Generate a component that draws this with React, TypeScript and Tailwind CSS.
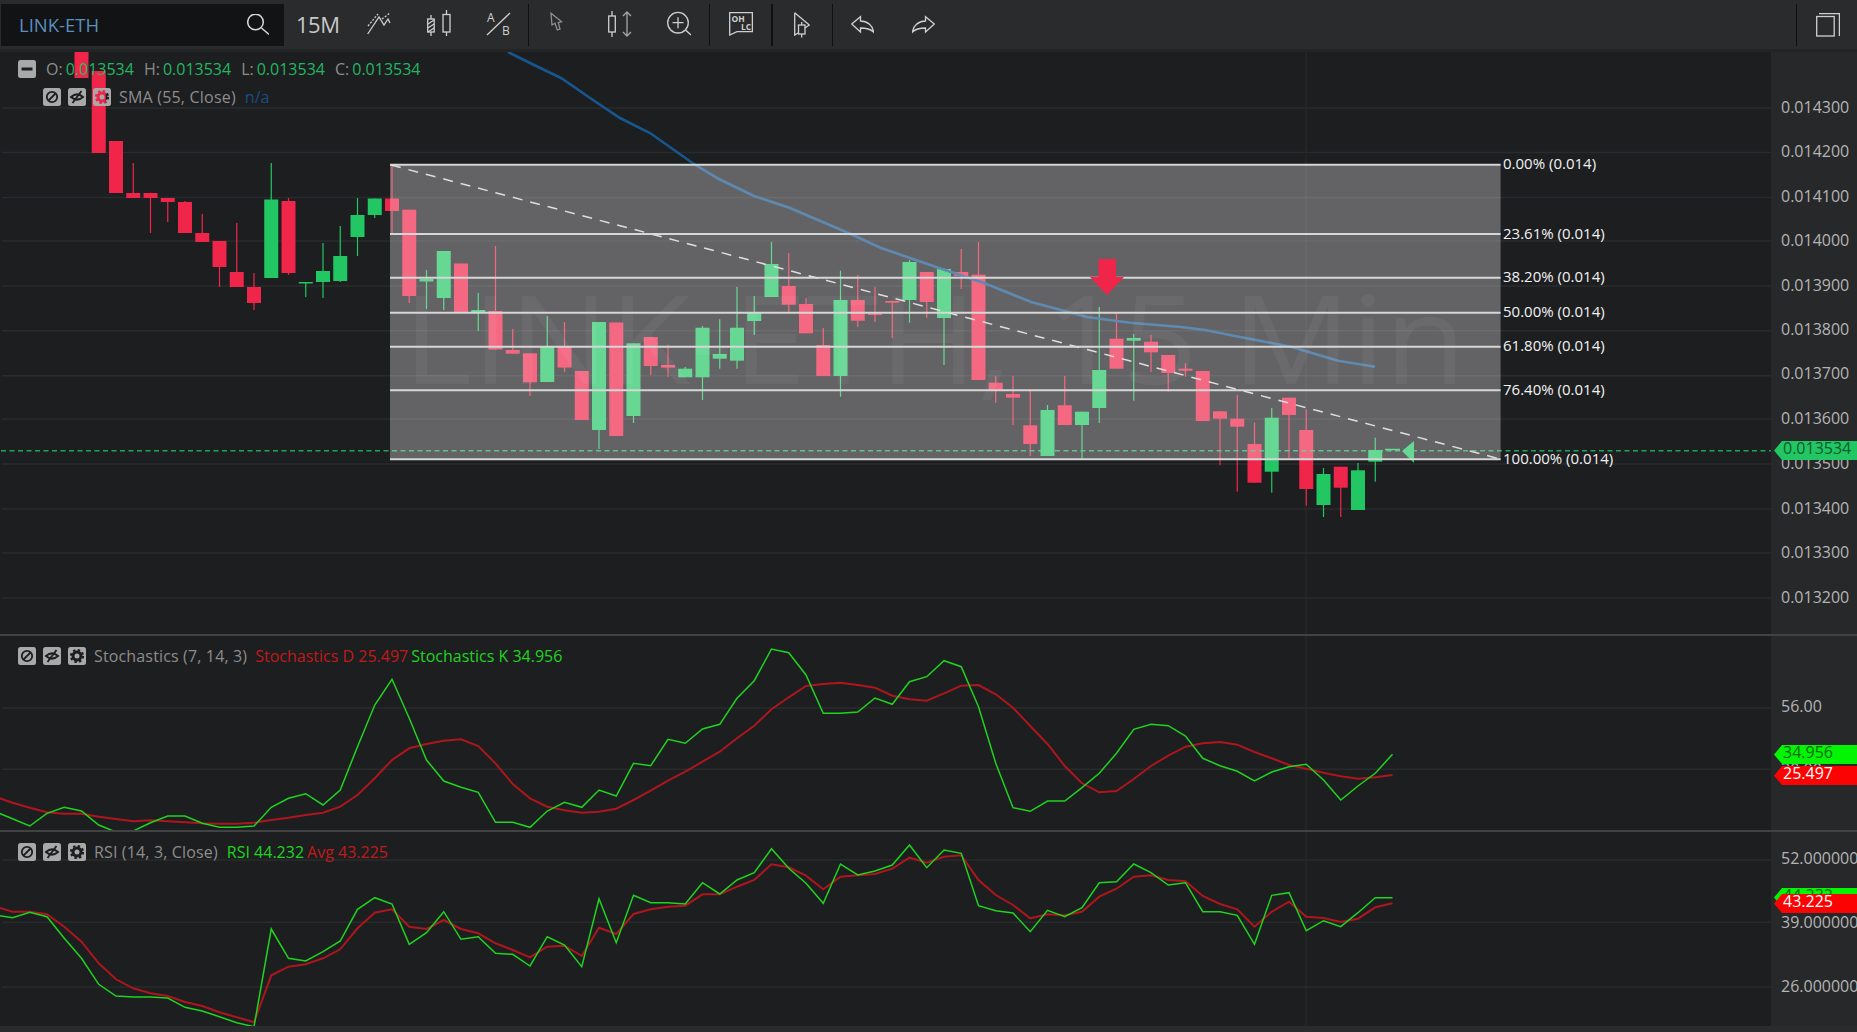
import React from 'react';

// [up, bodyTop, bodyBottom, wickTop, wickBottom]
type Candle = [number, number, number, number, number];

const candles: Candle[] = [
  [0, 40, 78, 40, 78], [0, 71, 153, 71, 153], [0, 141, 193, 141, 193], [0, 193, 198, 163, 198],
  [0, 193, 198, 193, 233], [0, 198, 202, 198, 222], [0, 202, 233, 201, 233], [0, 233, 242, 214, 242],
  [0, 241, 267, 241, 287], [0, 272, 287, 223, 287], [0, 287, 303, 273, 310], [1, 199.5, 278, 163, 278],
  [0, 201, 273, 198, 275], [1, 282, 283.5, 282, 297], [1, 271, 282, 243, 298], [1, 256, 281, 226, 282],
  [1, 215, 237, 198, 256], [1, 198.5, 215, 198.5, 218], [0, 198.5, 211, 165, 233], [0, 209.7, 296, 209.7, 303],
  [1, 279, 281.5, 270, 309], [1, 251, 298, 251, 310], [0, 263.5, 312.5, 263.5, 312.5], [1, 310, 313, 293, 331],
  [0, 311, 349.5, 246, 349.5], [0, 350, 353.7, 329, 353.7], [0, 353.3, 382.3, 353.3, 396], [1, 347, 382, 316, 382],
  [0, 347, 367.6, 322, 372], [0, 371, 420, 371, 420], [1, 322, 430, 322, 449], [0, 322.5, 436, 322.5, 436],
  [1, 343.3, 416, 343.3, 423], [0, 337, 366, 337, 375], [0, 365, 367.6, 344.7, 377], [1, 368.7, 377.3, 367, 377.3],
  [1, 327.7, 377.3, 326, 400], [1, 354, 358.7, 319.3, 368.7], [1, 327.7, 360.7, 287, 368.7], [1, 312.7, 321, 296, 335],
  [1, 264, 297, 242, 297], [0, 286, 304.7, 253, 312.7], [0, 304, 333.3, 298, 333.3], [0, 345, 376, 328, 376],
  [1, 300, 376, 270.7, 396.7], [0, 300, 320.7, 275, 327], [0, 313.5, 315, 287, 322], [0, 301, 302.7, 301, 338],
  [1, 262, 300, 260, 322.7], [0, 272, 302, 272, 318], [1, 269, 318, 268, 365], [0, 272, 276, 249, 289],
  [0, 274.7, 380, 242, 380], [0, 382.7, 390, 376, 402.7], [0, 394, 397.7, 376, 425], [0, 425.3, 444, 390.7, 456],
  [1, 410, 456, 405, 456], [0, 405.3, 425, 376, 425], [1, 411.7, 425, 411.7, 460], [1, 370, 408, 307, 423],
  [0, 338.7, 368.7, 312.7, 368.7], [1, 338, 340.7, 334, 400.7], [0, 341.7, 352.3, 335, 372], [0, 355, 373, 355, 391.7],
  [0, 368.7, 370.7, 363.3, 376.7], [0, 371, 421, 371, 421], [0, 411.3, 418.7, 411.3, 465.3], [0, 418.7, 426.7, 395, 491.7],
  [0, 444, 482.7, 422.7, 482.7], [1, 417.7, 471.7, 408, 492.7], [0, 397.7, 415, 397.7, 458], [0, 430, 489, 409.3, 505.7],
  [1, 474, 505, 468, 517], [0, 466.7, 487.7, 466.7, 517], [1, 470.3, 510, 463, 510], [1, 450, 461.7, 437.7, 481.7],
];

const candleX = (i: number) => 81.5 + 17.25 * i;

// indicator series start one step off each other at candle index -5
const stochK = [
  811.7, 818.7, 826, 813.3, 807.3, 811, 825, 832, 831, 822.7, 816, 816, 823.3, 827.3, 827.3, 826, 807.3, 798.3, 793.7, 805,
  790, 746.7, 705, 679.3, 718.3, 760, 781, 787.3, 792.3, 822.3, 822.3, 827.3, 811, 802.3, 807.3, 790, 796, 763.3, 765.7, 739.3,
  743.3, 729, 724.3, 698.3, 680.7, 649, 652.7, 675, 713.3, 713.3, 712, 698, 704.3, 681.7, 676.7, 660.7, 666.7, 706.7, 763.3, 807.7,
  811.3, 801, 801, 787.7, 773.3, 753.3, 729.3, 724.3, 725.7, 736, 758.3, 765.7, 771.3, 781, 772, 766.7, 764.3, 780, 800, 786,
  773.3, 754.3,
];
const stochD = [
  796.7, 802.7, 807.7, 812.3, 813.7, 813.7, 816.7, 819, 821.3, 820.3, 821.3, 822.3, 823.3, 823.7, 823.7, 822.7, 820, 817.7, 815, 812.7,
  806.7, 795, 778.3, 760, 748.3, 744, 740.7, 739.3, 746, 763.3, 784, 798.3, 806.7, 810.3, 812.7, 811.7, 808.7, 800, 790.7, 780.7,
  771.7, 761.7, 751.7, 738.3, 725.7, 709.3, 697.3, 686, 684, 682.7, 685, 687.7, 695.7, 699.3, 700.7, 693.3, 685.7, 685, 694.3, 707.7,
  726, 744, 766, 783.3, 792.3, 791, 779, 766, 755.7, 746.7, 743.3, 742, 744.7, 752, 758.3, 765, 768.7, 772.7, 776.3, 778.7,
  777.3, 775,
];
const rsiLine = [
  915, 917.7, 912.3, 916.7, 938.3, 958.3, 984.3, 996, 997, 997, 998, 1007.3, 1011, 1016.7, 1022.7, 1026.7, 929, 958.3, 961, 951.7,
  941, 909.3, 897.7, 904, 944.3, 932.7, 911.7, 939.3, 936.7, 953.3, 954.3, 966, 936.7, 945, 966.7, 898.7, 942.7, 895.3, 902.7, 902.7,
  904, 882.7, 894, 880, 872.7, 848.7, 868.3, 883.3, 903.3, 864, 875, 871, 865, 845, 867.7, 850, 853.3, 905.7, 910.7, 913,
  931.7, 910.3, 916.7, 907.7, 882.7, 881.7, 864, 872.7, 885, 882.7, 911.7, 911.7, 915.3, 944.3, 895.3, 892.7, 930.7, 920.7, 926.7, 912.7,
  897.7, 897.7,
];
const rsiAvg = [
  906.7, 911.7, 911.7, 914.3, 926.7, 941.7, 963.3, 979.3, 988.3, 993.3, 996, 1002, 1006, 1012.3, 1017.3, 1022.3, 975.3, 966.7, 964.3, 958.3,
  949.3, 928.3, 912.7, 909.3, 926.7, 929, 920, 929, 933.3, 943.3, 950, 957.3, 946.7, 945.7, 956, 927.7, 934, 914, 909.3, 906.7,
  905.7, 894.3, 894.3, 886.7, 880, 864.3, 867.3, 875.7, 889.3, 876.7, 875.3, 874, 868.7, 857.7, 862.7, 856.7, 855.3, 880, 895, 905,
  918.3, 914.3, 915.3, 911.7, 896.7, 888.7, 876.7, 875.3, 880, 881.3, 896, 904, 909.3, 926.7, 911.7, 901.7, 916.7, 918, 922, 918.7,
  907.3, 903.3,
];

const smaPoints =
  '508,52 530,63 561,78 593,100 620,118 650,133 695,164.7 719,179 754,196 790,208 853,235 881,248 936,267 984,283 1031,302 1087,317 1130,322.7 1181,327 1205,330 1240,337 1291,346.7 1338,360.7 1375,366.7';

const fibLevels = [
  { y: 164.7, label: '0.00% (0.014)' },
  { y: 234, label: '23.61% (0.014)' },
  { y: 277.7, label: '38.20% (0.014)' },
  { y: 312.7, label: '50.00% (0.014)' },
  { y: 346.7, label: '61.80% (0.014)' },
  { y: 390.3, label: '76.40% (0.014)' },
  { y: 459.3, label: '100.00% (0.014)' },
];

const CHART_W = 1771;
const CROSS_X = 1306;
const GRID = '#2a2b2d';

function toPoints(series: number[]) {
  return series.map((y, i) => `${candleX(i - 5)},${y}`).join(' ');
}

function GridLines({ ys }: { ys: number[] }) {
  return (
    <>
      {ys.map((y) => (
        <line key={y} x1={2} x2={CHART_W} y1={y} y2={y} stroke={GRID} strokeWidth={1.5} />
      ))}
      <line x1={CROSS_X} x2={CROSS_X} y1={0} y2={1032} stroke={GRID} strokeWidth={1} />
    </>
  );
}

function MainChart() {
  return (
    <svg className="absolute inset-0 block" width={CHART_W} height={582} viewBox={`0 52 ${CHART_W} 582`}>
      <GridLines ys={[108, 152.5, 197.5, 241, 286, 330.7, 375.7, 419, 464, 509, 553, 598]} />
      {candles.map(([up, top, bottom, wickTop, wickBottom], i) => {
        const x = candleX(i);
        const color = up ? '#22c764' : '#f0254a';
        return (
          <g key={i} fill={color}>
            <rect x={x - 0.6} y={wickTop} width={1.2} height={wickBottom - wickTop} />
            <rect x={x - 7} y={top} width={14} height={bottom - top} />
          </g>
        );
      })}
      <polyline points={smaPoints} fill="none" stroke="#17568f" strokeWidth={2.6} />
      <line x1={1} x2={CHART_W} y1={450.7} y2={450.7} stroke="#22c764" strokeOpacity={0.8} strokeWidth={1.6} strokeDasharray="5 3.5" />
      <line x1={1385} x2={1400} y1={449.5} y2={449.5} stroke="#22c764" strokeWidth={1.5} />
      <polygon points="1402,451 1414,441 1414,463" fill="#22c764" />
      {/* fibonacci box */}
      <rect x={390} y={164.7} width={1110.6} height={294.6} fill="#ffffff" fillOpacity={0.31} />
      <text x={403} y={384} fontSize={122} fill="#ffffff" fillOpacity={0.05} textLength={1063} lengthAdjust="spacingAndGlyphs">
        LINK-ETH, 15 Min
      </text>
      {fibLevels.map((level) => (
        <g key={level.label}>
          <line x1={390} x2={1500.6} y1={level.y} y2={level.y} stroke="#d6d6d6" strokeWidth={2} />
          <text x={1503} y={level.y + 4.5} fontSize={15} fill="#f2f2f2">
            {level.label}
          </text>
        </g>
      ))}
      <line x1={391} y1={165} x2={1500} y2={459} stroke="#dedede" strokeWidth={1.5} strokeDasharray="10 8" />
      <polygon points="1098.5,259 1116,259 1116,277 1124,277 1107,295 1090,277 1098.5,277" fill="#f0254a" />
    </svg>
  );
}

function IndicatorChart({ top, ys, green, red }: { top: number; ys: number[]; green: number[]; red: number[] }) {
  return (
    <svg className="absolute inset-0 block" width={CHART_W} height={194} viewBox={`0 ${top} ${CHART_W} 194`}>
      <GridLines ys={ys} />
      <polyline points={toPoints(red)} fill="none" stroke="#ad161d" strokeWidth={2} />
      <polyline points={toPoints(green)} fill="none" stroke="#1fd41f" strokeWidth={1.5} />
    </svg>
  );
}

function LegendIcon({ kind }: { kind: 'minus' | 'ban' | 'eye' | 'gear' }) {
  const id = `legend-${kind}`;
  return (
    <svg width={18} height={18} viewBox="0 0 18 18" className="shrink-0">
      <mask id={id}>
        <rect width={18} height={18} rx={2.5} fill="#fff" />
        {kind === 'minus' && <rect x={3.5} y={7.5} width={11} height={3} fill="#000" />}
        {kind === 'ban' && (
          <g stroke="#000" strokeWidth={1.8} fill="none">
            <circle cx={9} cy={9} r={5.2} />
            <line x1={5.5} y1={12.5} x2={12.5} y2={5.5} />
          </g>
        )}
        {kind === 'eye' && (
          <g stroke="#000" fill="none">
            <path d="M3 9 Q9 3.8 15 9 Q9 14.2 3 9Z" strokeWidth={2} />
            <line x1={4.5} y1={15} x2={13.5} y2={3} strokeWidth={1.8} />
          </g>
        )}
        {kind === 'gear' && (
          <g stroke="#000" fill="none">
            <circle cx={9} cy={9} r={4} strokeWidth={3} />
            <circle cx={9} cy={9} r={6} strokeWidth={2.2} strokeDasharray="2.4 2.31" />
          </g>
        )}
      </mask>
      <rect width={18} height={18} fill="#a9a9a9" mask={`url(#${id})`} />
    </svg>
  );
}

function IconGroup() {
  return (
    <div className="flex gap-[7px]">
      <LegendIcon kind="ban" />
      <LegendIcon kind="eye" />
      <LegendIcon kind="gear" />
    </div>
  );
}

function OhlcPart({ name, className }: { name: string; className: string }) {
  return (
    <span className={className}>
      <span className="text-[#8d8d8d]">{name}:</span>
      <span className="ml-[3px] text-[#23b662]">0.013534</span>
    </span>
  );
}

function MainLegend() {
  return (
    <div className="absolute left-[18px] top-[8px] text-base leading-[18px]">
      <div className="flex items-center">
        <LegendIcon kind="minus" />
        <OhlcPart name="O" className="ml-[10px]" />
        <OhlcPart name="H" className="ml-[10px]" />
        <OhlcPart name="L" className="ml-[10px]" />
        <OhlcPart name="C" className="ml-[10px]" />
      </div>
      <div className="mt-[10px] flex items-center pl-[25px]">
        <IconGroup />
        <span className="ml-[8px] tracking-[0.2px] text-[#8d8d8d]">SMA (55, Close)</span>
        <span className="ml-[9px] text-[#1a4d80]">n/a</span>
      </div>
    </div>
  );
}

function Tick({ y, children }: { y: number; children: string }) {
  return (
    <div className="absolute left-[10px] -translate-y-1/2 whitespace-nowrap text-base leading-none text-[#b4b4b4]" style={{ top: y }}>
      {children}
    </div>
  );
}

function Tag({ y, color, text, children }: { y: number; color: string; text: string; children: string }) {
  return (
    <div className="absolute left-[3px] right-0 h-[19px]" style={{ top: y }}>
      <svg className="absolute inset-0" width={83} height={19} viewBox="0 0 83 19">
        <polygon points="0,9.5 8,0 83,0 83,19 8,19" fill={color} />
      </svg>
      <span className="absolute left-[9px] top-[-2px] text-base leading-[19px]" style={{ color: text }}>
        {children}
      </span>
    </div>
  );
}

function ToolIcon({ w, className, children }: { w: number; className?: string; children: React.ReactNode }) {
  return (
    <svg
      width={w}
      height={49}
      viewBox={`0 0 ${w} 49`}
      fill="none"
      stroke="#cfcfcf"
      strokeWidth={1.3}
      className={`shrink-0 ${className ?? ''}`}
    >
      {children}
    </svg>
  );
}

function Divider({ className }: { className: string }) {
  return <div className={`h-[42px] shrink-0 bg-[#0f1011] ${className}`} />;
}

function Toolbar() {
  return (
    <div className="flex h-[49px] shrink-0 items-center bg-[#2a2b2d]">
      <div className="ml-px flex h-[42px] w-[283px] shrink-0 items-center justify-between bg-[#121315] pl-[18px] pr-[15px]">
        <span className="text-[18.5px] text-[#5a8fbf]">LINK-ETH</span>
        <svg width={22} height={22} viewBox="0 0 22 22" fill="none" stroke="#d8d8d8" strokeWidth={1.5}>
          <circle cx={8.5} cy={8} r={7.8} />
          <line x1={14.5} y1={14} x2={22} y2={20.5} />
        </svg>
      </div>
      <span className="ml-[12px] w-[43px] shrink-0 whitespace-nowrap text-[22px] tracking-[-0.5px] text-[#c8c8c8]">15M</span>
      <ToolIcon w={24} className="ml-[28px]">
        <polyline points="0.7,34 12,17 17,25 21,19 23,23" />
        <polyline points="1,26 11,14" strokeDasharray="2 1.5" />
        <polyline points="15,19 23,13" strokeDasharray="2 1.5" />
      </ToolIcon>
      <ToolIcon w={25} className="ml-[36px]">
        <rect x={0.7} y={19} width={6.5} height={13} />
        <path d="M4 15V19M4 32V36M1 24L7 20M1 28L7 24M1 32L7 28" />
        <rect x={16} y={14.5} width={7} height={17.5} />
        <path d="M19.5 10V14.5M19.5 32V36" />
      </ToolIcon>
      <ToolIcon w={25} className="ml-[34px]">
        <line x1={1} y1={35} x2={24} y2={13} />
        <text x={1} y={22} fontSize={12} fill="#cfcfcf" stroke="none">
          A
        </text>
        <text x={16} y={35} fontSize={12} fill="#cfcfcf" stroke="none">
          B
        </text>
      </ToolIcon>
      <Divider className="ml-[17px] w-px" />
      <ToolIcon w={13} className="ml-[21px]">
        <path d="M1 13.3L2 25L5 23.3L7.3 30L10 29L8.3 22.7L11.7 21.7Z" stroke="#8f8f8f" />
      </ToolIcon>
      <ToolIcon w={24} className="ml-[45px]">
        <rect x={0.7} y={16} width={6.6} height={16} />
        <path d="M4 11V16M4 32V37" />
        <path d="M19 12V36M15 16L19 12L23 16M15 32L19 36L23 32" stroke="#a6a6a6" />
      </ToolIcon>
      <ToolIcon w={24} className="ml-[35px]">
        <circle cx={11} cy={22.7} r={10.3} />
        <path d="M18.5 30L24 35M5.5 22.7H16.5M11 17.2V28.2" />
      </ToolIcon>
      <Divider className="ml-[18px] w-px" />
      <ToolIcon w={24} className="ml-[19px]">
        <path d="M0.7 12.7H23.4V31.7H8L0.7 35Z" />
        <text x={2.5} y={21.5} fontSize={8.5} fontWeight={700} fill="#cfcfcf" stroke="none">
          OH
        </text>
        <text x={12} y={29.5} fontSize={8.5} fontWeight={700} fill="#cfcfcf" stroke="none">
          LC
        </text>
      </ToolIcon>
      <Divider className="ml-[18px] w-[2px]" />
      <ToolIcon w={16} className="ml-[21px]">
        <path d="M0.7 12.7V35L4 33M0.7 12.7L15.3 25L11 28" />
        <rect x={4.5} y={25} width={6.5} height={9} />
        <path d="M7.7 22V25M7.7 34V37.5" />
      </ToolIcon>
      <Divider className="ml-[22px] w-px" />
      <ToolIcon w={23} className="ml-[18px]">
        <path d="M0.7 24L9.5 16.7V21C16 21 21.5 25 22.5 32C19 28.5 14 28 9.5 28V32Z" />
      </ToolIcon>
      <ToolIcon w={23} className="ml-[38px]">
        <path d="M22.3 24L13.5 16.7V21C7 21 1.5 25 0.5 32C4 28.5 9 28 13.5 28V32Z" />
      </ToolIcon>
      <div className="flex-1" />
      <Divider className="w-px" />
      <ToolIcon w={24} className="ml-[19px] mr-[17px]">
        <rect x={0.7} y={16.5} width={17.5} height={19.5} />
        <path d="M3 13.7H23.4V36" />
      </ToolIcon>
    </div>
  );
}

function Pane({ height, chart, axis }: { height: string; chart: React.ReactNode; axis: React.ReactNode }) {
  return (
    <div className={`flex shrink-0 ${height}`}>
      <div className="relative w-[1771px] shrink-0 overflow-hidden bg-[#1d1e20]">{chart}</div>
      <div className="relative flex-1 overflow-hidden bg-[#27282a]">{axis}</div>
    </div>
  );
}

const priceTicks = [
  [107, '0.014300'], [151, '0.014200'], [195.7, '0.014100'], [240, '0.014000'],
  [285, '0.013900'], [328.5, '0.013800'], [373.3, '0.013700'], [417.7, '0.013600'],
  [463, '0.013500'], [508, '0.013400'], [552, '0.013300'], [597, '0.013200'],
] as const;

export default function App() {
  return (
    <div className="flex h-[1032px] w-[1857px] flex-col overflow-hidden bg-[#2a2b2d] font-['Open_Sans',sans-serif]">
      <Toolbar />
      <div className="h-[3px] shrink-0 bg-[#232426]" />
      <Pane
        height="h-[582px]"
        chart={
          <>
            <MainChart />
            <MainLegend />
          </>
        }
        axis={
          <>
            {priceTicks.map(([y, label]) => (
              <Tick key={label} y={y - 52}>
                {label}
              </Tick>
            ))}
            <Tag y={389} color="#22c764" text="#0a5a2c">
              0.013534
            </Tag>
          </>
        }
      />
      <div className="h-[2px] shrink-0 bg-[#414244]" />
      <Pane
        height="h-[194px]"
        chart={
          <>
            <IndicatorChart top={636} ys={[708, 769.3]} green={stochK} red={stochD} />
            <div className="absolute left-[18px] top-[11px] flex items-center whitespace-nowrap text-base leading-[18px]">
              <IconGroup />
              <span className="ml-[8px] tracking-[0.15px] text-[#8d8d8d]">Stochastics (7, 14, 3)</span>
              <span className="ml-[8px] text-[#c01a1a]">Stochastics D 25.497</span>
              <span className="ml-[3px] text-[#1fd41f]">Stochastics K 34.956</span>
            </div>
          </>
        }
        axis={
          <>
            <Tick y={70}>56.00</Tick>
            <Tick y={133}>30.00</Tick>
            <Tag y={109.3} color="#03f503" text="#0a6a0a">
              34.956
            </Tag>
            <Tag y={129.7} color="#fb0303" text="#ffffff">
              25.497
            </Tag>
          </>
        }
      />
      <div className="h-[2px] shrink-0 bg-[#414244]" />
      <Pane
        height="h-[194px]"
        chart={
          <>
            <IndicatorChart top={832} ys={[860, 922.3, 987]} green={rsiLine} red={rsiAvg} />
            <div className="absolute left-[18px] top-[11px] flex items-center whitespace-nowrap text-base leading-[18px]">
              <IconGroup />
              <span className="ml-[8px] tracking-[0.15px] text-[#8d8d8d]">RSI (14, 3, Close)</span>
              <span className="ml-[9px] text-[#1fd41f]">RSI 44.232</span>
              <span className="ml-[3px] text-[#c01a1a]">Avg 43.225</span>
            </div>
          </>
        }
        axis={
          <>
            <Tick y={26}>52.000000</Tick>
            <Tick y={89.7}>39.000000</Tick>
            <Tick y={154}>26.000000</Tick>
            <Tag y={56.3} color="#03f503" text="#0a6a0a">
              44.232
            </Tag>
            <Tag y={61.7} color="#fb0303" text="#ffffff">
              43.225
            </Tag>
          </>
        }
      />
    </div>
  );
}
